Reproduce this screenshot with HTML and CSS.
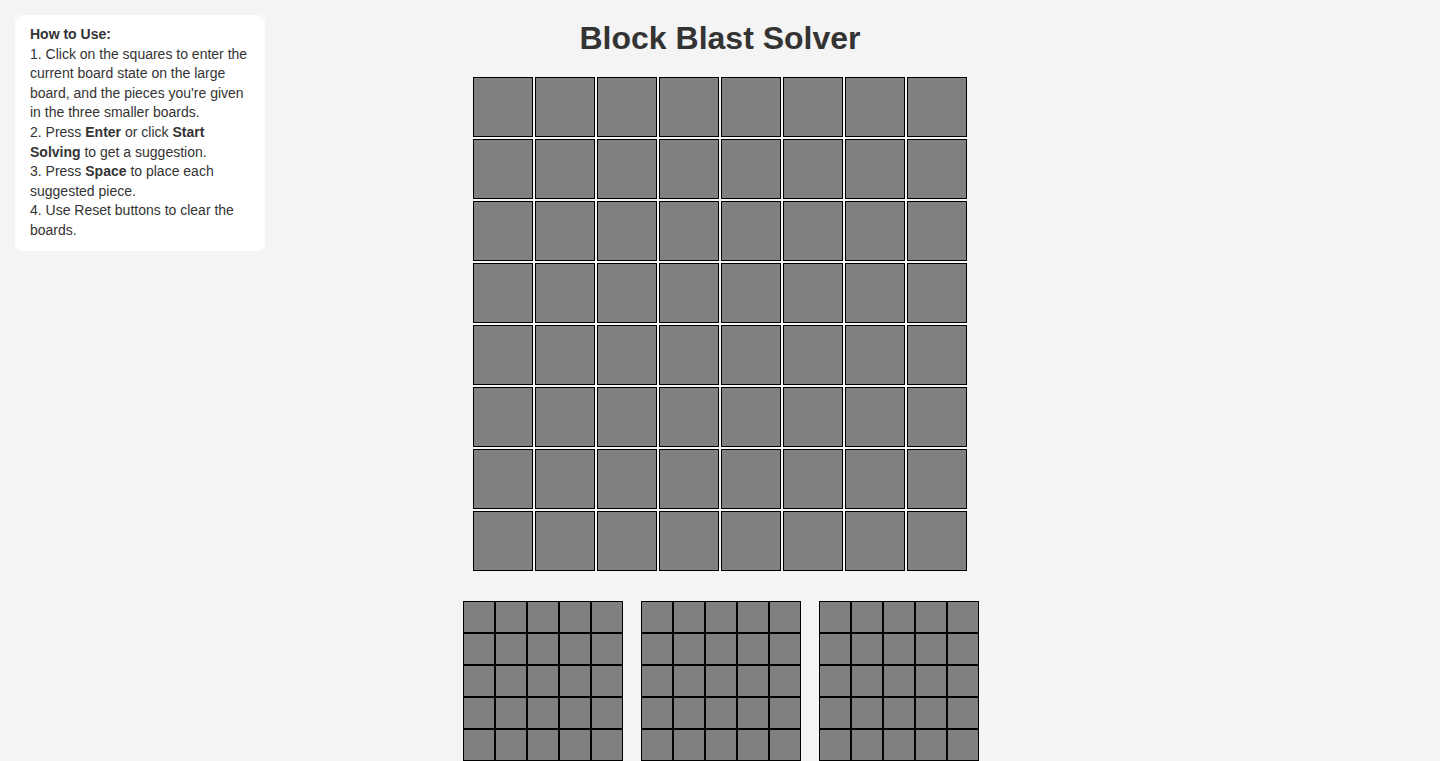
FILE: index.html
```html
<!DOCTYPE html>
<html lang="en">
<head>
<meta charset="utf-8">
<title>Block Blast Solver</title>
<link rel="stylesheet" href="styles.css">
</head>
<body>
<div class="instructions">
  <strong>How to Use:</strong><br>
  1. Click on the squares to enter the current board state on the large board, and the pieces you're given in the three smaller boards.<br>
  2. Press <strong>Enter</strong> or click <strong>Start Solving</strong> to get a suggestion.<br>
  3. Press <strong>Space</strong> to place each suggested piece.<br>
  4. Use Reset buttons to clear the boards.
</div>
<h1 class="title">Block Blast Solver</h1>
<div class="board" id="board"></div>
<div class="pieces">
  <div class="piece"></div>
  <div class="piece"></div>
  <div class="piece"></div>
</div>
<script>
  var b = document.getElementById('board');
  for (var i = 0; i < 64; i++) { var c = document.createElement('div'); c.className = 'cell'; b.appendChild(c); }
  document.querySelectorAll('.piece').forEach(function (p) {
    for (var i = 0; i < 25; i++) { var c = document.createElement('div'); c.className = 'pcell'; p.appendChild(c); }
  });
</script>
</body>
</html>
```

FILE: styles.css
```css
html, body {
  margin: 0;
  padding: 0;
}
body {
  background: #f4f4f4;
  font-family: "Liberation Sans", Arial, sans-serif;
  color: #333;
  overflow: hidden;
  height: 761px;
}
.instructions {
  position: absolute;
  top: 15px;
  left: 15px;
  width: 250px;
  box-sizing: border-box;
  padding: 10px 15px;
  background: #fff;
  border-radius: 8px;
  font-size: 14px;
  line-height: 1.4;
}
.title {
  margin: 20px 0;
  text-align: center;
  font-size: 32px;
  font-weight: bold;
  line-height: 37px;
}
.board {
  display: grid;
  grid-template-columns: repeat(8, 60px);
  grid-auto-rows: 60px;
  gap: 2px;
  width: 494px;
  margin: 0 auto;
}
.cell {
  box-sizing: border-box;
  border: 1px solid #000;
  background: #808080;
}
.pieces {
  display: flex;
  justify-content: center;
  gap: 18px;
  margin-top: 30px;
  padding-left: 2px;
}
.piece {
  display: grid;
  grid-template-columns: repeat(5, 32px);
  grid-auto-rows: 32px;
}
.pcell {
  box-sizing: border-box;
  border: 1px solid #000;
  background: #808080;
}
```
